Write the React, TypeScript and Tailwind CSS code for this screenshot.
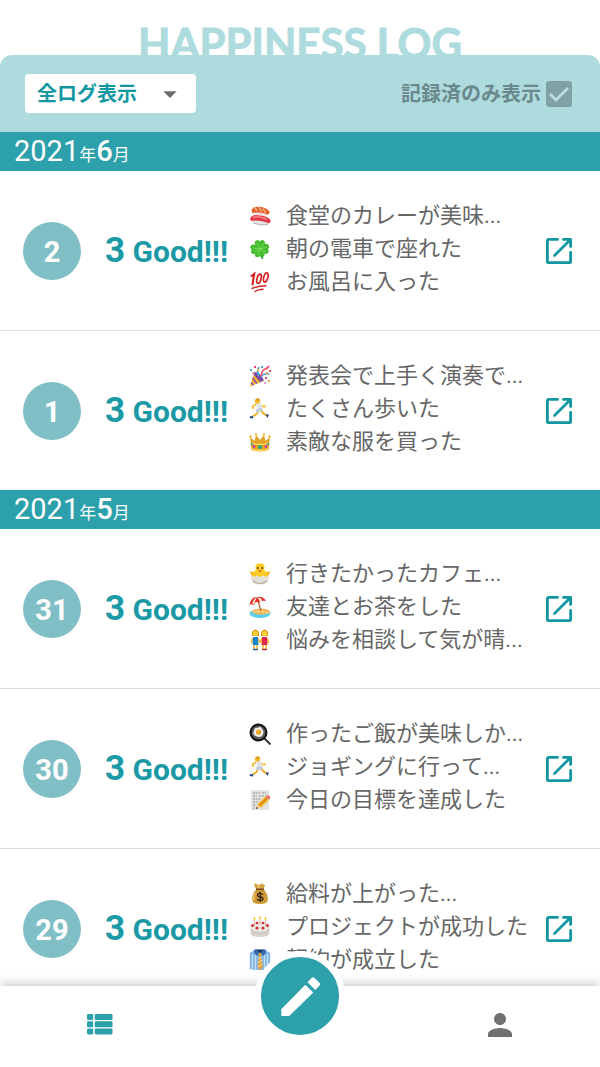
import type { ReactNode } from "react";
import { MdArrowDropDown, MdPerson } from "react-icons/md";

type EmojiName =
  | "sushi" | "clover" | "hundred" | "party" | "runner" | "crown" | "chick" | "beach"
  | "friends" | "egg" | "memo" | "money" | "cake" | "shirt";

type Entry = { emoji: EmojiName; text: string };
type Day = { day: number; entries: Entry[] };
type Month = { year: number; month: number; days: Day[] };

const months: Month[] = [
  {
    year: 2021,
    month: 6,
    days: [
      {
        day: 2,
        entries: [
          { emoji: "sushi", text: "食堂のカレーが美味..." },
          { emoji: "clover", text: "朝の電車で座れた" },
          { emoji: "hundred", text: "お風呂に入った" },
        ],
      },
      {
        day: 1,
        entries: [
          { emoji: "party", text: "発表会で上手く演奏で..." },
          { emoji: "runner", text: "たくさん歩いた" },
          { emoji: "crown", text: "素敵な服を買った" },
        ],
      },
    ],
  },
  {
    year: 2021,
    month: 5,
    days: [
      {
        day: 31,
        entries: [
          { emoji: "chick", text: "行きたかったカフェ..." },
          { emoji: "beach", text: "友達とお茶をした" },
          { emoji: "friends", text: "悩みを相談して気が晴..." },
        ],
      },
      {
        day: 30,
        entries: [
          { emoji: "egg", text: "作ったご飯が美味しか..." },
          { emoji: "runner", text: "ジョギングに行って..." },
          { emoji: "memo", text: "今日の目標を達成した" },
        ],
      },
      {
        day: 29,
        entries: [
          { emoji: "money", text: "給料が上がった..." },
          { emoji: "cake", text: "プロジェクトが成功した" },
          { emoji: "shirt", text: "契約が成立した" },
        ],
      },
    ],
  },
];

const drawings: Record<EmojiName, ReactNode> = {
  sushi: (
    <>
      <path d="M3 6.500 L18 9 L19 11 L4 9.500Z" fill="#e9e6e2" />
      <path d="M2.500 5 Q4 1.500 9 1.800 Q17 2 20.500 6.500 Q21 9.500 18.500 9.500 Q11 6.500 3 8Z" fill="#e8642f" />
      <path d="M6 2.500 L8 6 M10 2.500 L12.500 6.500 M14 3.600 L16.500 7.700" stroke="#ffc09a" strokeWidth="1.200" />
      <path d="M2 14.500 Q3 19 11 20 Q20 21 20.500 17 L19 15 L3 13Z" fill="#e6e4e2" />
      <path d="M4 18 Q12 21 19 19.500" stroke="#b8b4b4" strokeWidth="1" fill="none" />
      <path d="M1 13.500 Q3 9.500 9 10.200 Q19 11 21.500 15 Q22 18.500 19.500 18.200 Q11 14.500 2 16Z" fill="#e23a4b" />
      <path d="M4 12.300 Q11 10.500 18 14.500" stroke="#ff9ba1" strokeWidth="1.200" fill="none" />
    </>
  ),
  clover: (
    <>
      <path d="M11 11 Q11 18 14 21" stroke="#2d9a28" strokeWidth="1.600" fill="none" />
      <g fill="#45bd31">
        <path d="M11 11 Q4.500 7.500 6 3.500 Q8.500 .5 11 3.500 Q14 .5 16 4 Q17 8 11 11Z" />
        <path d="M11 11 Q15.500 4 19 6.500 Q21.500 9 19 11 Q21 14 17.500 16 Q14 16.500 11 11Z" />
        <path d="M11 11 Q6 5 2.500 7 Q0 9.500 2.800 11.500 Q.5 14.500 4 16 Q7.500 17 11 11Z" />
        <path d="M11 11 Q5.500 14 6 18 Q8 20.500 10.500 18 Q13.500 20.500 15.500 17.500 Q16 14 11 11Z" />
      </g>
      <path d="M8 5 L11 11 L15.500 5 M4 10 L11 11 L18 9 M5 14.500 L11 11 L9 17 M11 11 L16.500 14" stroke="#8bdd66" strokeWidth=".8" fill="none" />
    </>
  ),
  hundred: (
    <g stroke="#d6211e" fill="none" strokeLinecap="round">
      <path d="M2.500 5 L5.200 3 L3.500 13.500" strokeWidth="2.100" />
      <ellipse cx="10" cy="7.700" rx="2" ry="4.700" transform="rotate(15 10 7.700)" strokeWidth="1.700" />
      <ellipse cx="16.800" cy="6.400" rx="2" ry="4.700" transform="rotate(15 16.800 6.400)" strokeWidth="1.700" />
      <path d="M3 17.500 Q10 14.500 17 14.700" strokeWidth="1.500" />
      <path d="M6 20.500 Q9 18.500 14 18.300" strokeWidth="1.500" />
    </g>
  ),
  party: (
    <>
      <path d="M5.500 7 L14.500 16 L1 21.500Z" fill="#f5b52d" />
      <path d="M5 9 L12 17 M3.500 13 L8 18.500 M2 17.500 L4.500 20" stroke="#8a4ca8" strokeWidth="1.600" />
      <ellipse cx="10" cy="11.700" rx="2.200" ry="6.200" transform="rotate(-45 10 11.700)" fill="#79509f" />
      <path d="M10 11 Q7 6 10 2 M12 12 Q14 8 20.500 9" stroke="#4b9ae8" strokeWidth="1.600" fill="none" />
      <path d="M12 11 Q13 5 16 4 T20 1" stroke="#ef5371" strokeWidth="1.700" fill="none" />
      <path d="M5 1h2v2h-2z M16 12h2v2h-2z M20 5h2v2h-2z" fill="#e94666" />
      <path d="M1 4h2v2h-2z M12 1h2v2h-2z" fill="#5a9ff0" />
      <path d="M8 4h2v2h-2z M19 15h2v2h-2z M17 7h2v2h-2z" fill="#f5ad31" />
      <path d="M3 7h2v2h-2z M15 17h2v2h-2z" fill="#ed9cd0" />
    </>
  ),
  runner: (
    <>
      <path d="M12 12.500 L15 16 L18 17.500 M9.500 13 L7.500 16 L3.500 18.500" stroke="#efb027" strokeWidth="2" fill="none" />
      <path d="M7 6 L3.500 8.500 L4.500 11 M12.500 7 L15 9 L16.500 7.500" stroke="#f4b72c" strokeWidth="1.600" fill="none" />
      <path d="M6.500 5 L11.500 5 L13.500 10.500 L8.500 11.500Z" fill="#dfe4e9" />
      <path d="M8 10.500 L13 10 L14 13 L11 14 L8 15 L6.500 13Z" fill="#c6ced7" />
      <circle cx="8.500" cy="3" r="2.600" fill="#f5b928" />
      <path d="M6.500 2 Q8.500 -.500 11 1.500 L9 2.500Z" fill="#d59013" />
      <path d="M16.500 16.500 L20 16.500 L18.500 20Z M1 18 L4.500 18.500 L3.800 20.500 L.800 20Z" fill="#27448b" />
    </>
  ),
  crown: (
    <>
      <path d="M1 6 L5.500 10 L7 4 L11 9 L15 4 L16.500 10 L21 6 L19.500 19 Q11 22 2.500 19Z" fill="#e0a223" />
      <path d="M3 12 Q11 15 19 12 M3 18 Q11 21 19 18" stroke="#ffdf64" strokeWidth="1.300" fill="none" />
      <g fill="#f2bd38">
        <circle cx="1.500" cy="5.500" r="1.200" /><circle cx="7" cy="3.500" r="1.300" />
        <circle cx="15" cy="3.500" r="1.300" /><circle cx="20.500" cy="5.500" r="1.200" />
      </g>
      <circle cx="11" cy="16" r="2" fill="#16ac84" />
      <circle cx="5" cy="15.500" r="1.400" fill="#d13dad" />
      <circle cx="17" cy="15.500" r="1.400" fill="#d13dad" />
      <circle cx="2.800" cy="13" r="1" fill="#21a594" />
      <circle cx="19.200" cy="13" r="1" fill="#21a594" />
    </>
  ),
  chick: (
    <>
      <path d="M5 9 L.500 8.500 L3 13 L8 15 M17 9 L21.500 8.500 L19 13 L14 15" fill="#f8b51e" />
      <path d="M4 13 Q4 8 7 7 Q5 0 11 .500 Q17 0 15 7 Q18 8 18 13 L15 16 H7Z" fill="#ffcc27" />
      <circle cx="8.700" cy="5" r=".9" fill="#4b3319" /><circle cx="13.300" cy="5" r=".9" fill="#4b3319" />
      <path d="M8.800 7 H13.200 L11 9.500Z" fill="#e56d20" />
      <path d="M2 12 L5 14 L8 12.500 L11 14 L14 12.500 L17 14 L20 12 Q20.500 21.500 11 21.500 Q1.500 21.500 2 12Z" fill="#e2dfd9" />
      <path d="M4 18 Q11 23 18 18" stroke="#aea69a" strokeWidth="1.200" fill="none" />
    </>
  ),
  beach: (
    <>
      <ellipse cx="11" cy="17.500" rx="10.500" ry="4.500" fill="#5dd0e9" />
      <ellipse cx="12" cy="15.500" rx="9" ry="3" fill="#f4b65c" />
      <path d="M4 16 Q10 14 20 17" stroke="#ffe08b" strokeWidth="1" fill="none" />
      <path d="M8.500 3 L12 15" stroke="#a76334" strokeWidth="1.200" />
      <path d="M.5 9 Q2 1 8 1 Q14 0 17 5 Q12 4 10 7 Q6 4.500 5 9 Q2 7.500 .5 9Z" fill="#e53528" />
      <path d="M3.500 8 Q3.500 4 8 1 Q5.500 5 5.500 8Z M8 1 Q13 2 13 5 L11 6 Q10.500 3 8 1Z" fill="#fff1e7" />
    </>
  ),
  friends: (
    <>
      <path d="M4 9 L2 14 M9 9 L11 14 M13 9 L11 14 M18 9 L20 14 M5 14 L5 21 M8 14 L8 21 M14 14 L14 21 M17 14 L17 21" stroke="#f4b927" strokeWidth="1.500" />
      <path d="M4 8 H9 L9.500 16 H3.500Z" fill="#1686c7" />
      <path d="M13 8 H18 L18.500 16 H12.500Z" fill="#df2848" />
      <g fill="#d7951a"><path d="M3 7 V3 Q6.500 -2 10 3 V7Z" /><path d="M12 7 V3 Q15.500 -2 19 3 V7Z" /></g>
      <g fill="#ffcf37"><circle cx="6.500" cy="4.500" r="2.600" /><circle cx="15.500" cy="4.500" r="2.600" /></g>
      <path d="M4 20.500 H9" stroke="#245f99" strokeWidth="1.500" />
      <path d="M13 20.500 H18" stroke="#bd2741" strokeWidth="1.500" />
    </>
  ),
  egg: (
    <>
      <path d="M15.500 15.500 L20.800 20.800" stroke="#3b3b3b" strokeWidth="2.200" strokeLinecap="round" />
      <circle cx="9.500" cy="9.500" r="8" fill="#5a5a5a" stroke="#111" strokeWidth="2" />
      <path d="M5 8 Q5 4 9 5 Q11 2 13 6 Q16 9 13 13 Q10 15 7 13 Q3 12 5 8Z" fill="#f1efe9" />
      <circle cx="9.500" cy="9" r="2.600" fill="#f1a11d" />
      <circle cx="8.800" cy="8.300" r=".8" fill="#ffdc75" />
    </>
  ),
  memo: (
    <>
      <path d="M2 1 H20 V21 H2Z" fill="#e3e3e1" />
      <path d="M4 4 H11 M13 4 H17 M4 7 H8 M10 7 H15 M4 10 H12 M4 13 H9 M4 16 H7 M4 19 H6" stroke="#929292" strokeWidth="1" strokeDasharray="2 .7" />
      <path d="M7 20 L8.500 15 L16.500 7.500 L20 11 L12 18.500Z" fill="#f5b51e" />
      <path d="M10 17 L18 9" stroke="#d47717" strokeWidth="1.100" />
      <path d="M16.500 7.500 L18 6 Q20 5.500 21.500 8.500 L20 11Z" fill="#e67673" />
      <path d="M7 20 L8.500 15 L12 18.500Z" fill="#f0cf9b" />
      <path d="M7 20 L7.700 17.800 L9 19.300Z" fill="#383838" />
    </>
  ),
  money: (
    <>
      <path d="M7 6 Q4 1 6 .5 L10 2 L13 .5 L16 2 L14.500 6Z" fill="#cfa13e" />
      <path d="M7.500 6 H14.500 Q20 12 18.500 18 Q18 21 11 21 Q4 21 3.500 18 Q2 12 7.500 6Z" fill="#cc9a35" />
      <path d="M6 10 Q4 14 5 17 M9 2 L10 6" stroke="#efcd73" strokeWidth="1.300" fill="none" />
      <path d="M7 6.300 H15" stroke="#7e4b22" strokeWidth="1.700" />
      <path d="M14 11.300 Q8.500 9 8.500 12 Q8.500 13.500 11 13.800 Q14 14 14 16 Q13 18.500 8 16.700 M11.200 9 V19" stroke="#342717" strokeWidth="1.300" fill="none" />
    </>
  ),
  cake: (
    <>
      <path d="M1.500 11 V17 Q2 21 11 21 Q20 21 20.500 17 V11Z" fill="#d6d3ce" />
      <ellipse cx="11" cy="10.500" rx="9.500" ry="5" fill="#eeeae5" />
      <path d="M2 15 Q11 20 20 15" stroke="#c5c0bb" strokeWidth=".8" fill="none" />
      <path d="M5.500 4 V10 M11 3 V9 M16.500 4 V10" stroke="#dfb9a0" strokeWidth="1.300" />
      <path d="M5.500 1 V4 M11 .5 V3 M16.500 1 V4" stroke="#f5c136" strokeWidth="1.600" />
      <g fill="#cd3039">
        <circle cx="3.500" cy="9.500" r="1.500" /><circle cx="8" cy="7" r="1.300" />
        <circle cx="14" cy="7" r="1.300" /><circle cx="18.500" cy="9.500" r="1.500" />
        <circle cx="8" cy="12" r="1.600" /><circle cx="14" cy="12" r="1.600" />
      </g>
    </>
  ),
  shirt: (
    <>
      <path d="M5 1.500 L.800 4 V20 L5 21 H17 L21.200 20 V4 L17 1.500Z" fill="#86b6e4" />
      <path d="M3.500 5 V20 M6.500 6 V21 M15.500 6 V21 M18.500 5 V20" stroke="#c4e1f8" strokeWidth="1.200" />
      <path d="M5 .5 H17 L16.500 5 L13.500 7 L11 3.500 L8.500 7 L5 4Z" fill="#376da7" />
      <path d="M7 .8 H15 L11 4Z" fill="#183a65" />
      <path d="M9.500 4 H12.500 L12 7 L14 18 L11 21 L8.500 18 L10 7Z" fill="#e2a237" />
      <path d="M9.500 10 L12.500 8 M9 14 L13 11 M9 18 L13.500 15" stroke="#fff0be" strokeWidth="1" />
    </>
  ),
};

function Emoji({ name }: { name: EmojiName }) {
  return (
    <svg viewBox="0 0 22 22" className="size-[22px] shrink-0" aria-hidden="true">
      {drawings[name]}
    </svg>
  );
}

function OpenIcon() {
  return (
    <svg
      viewBox="0 0 28 28"
      className="size-7"
      fill="none"
      stroke="currentColor"
      strokeWidth="2.800"
      strokeLinecap="round"
      strokeLinejoin="round"
      aria-hidden="true"
    >
      <path d="M12.500 2.400 H3.500 Q2.400 2.400 2.400 3.500 V24.500 Q2.400 25.600 3.500 25.600 H24.500 Q25.600 25.600 25.600 24.500 V15.500" />
      <path d="M18.500 2.400 H25.600 V9.600 M25 3 L9.500 18.500" />
    </svg>
  );
}

function ListIcon() {
  return (
    <svg viewBox="0 0 26 21" className="h-[21px] w-[26px]" fill="currentColor" aria-hidden="true">
      {[0, 7.2, 14.4].map((y) => (
        <g key={y}>
          <rect x="0" y={y} width="6.200" height="6" rx="1.300" />
          <rect x="7.700" y={y} width="17.800" height="6" rx="1.300" />
        </g>
      ))}
    </svg>
  );
}

function PencilIcon() {
  return (
    <svg
      viewBox="0 0 41 41"
      className="size-[41px]"
      fill="currentColor"
      stroke="currentColor"
      strokeWidth="1.400"
      strokeLinejoin="round"
      aria-hidden="true"
    >
      <path d="M2 39.300 V33.500 L25.300 9.700 L32.300 16.600 L9 39.300Z" />
      <path d="M28.500 6.200 L32.100 2.500 Q33 1.700 34 2.500 L39 7.200 Q39.800 8.100 39 9 L35.300 13Z" />
    </svg>
  );
}

function DayRow({ day, entries }: Day) {
  return (
    <li className="flex items-center border-b border-[#dcdcdc] py-7 pr-[27px] pl-[23px] last:border-b-0">
      <div className="flex size-[58px] shrink-0 items-center justify-center rounded-full bg-[#80bfc6] pt-0.5 text-[29px] leading-10 font-bold text-white">
        {day}
      </div>
      <p className="ml-6 w-[144px] shrink-0 pt-0.5 text-[30px] leading-10 font-bold whitespace-nowrap text-[#1b99a5]">
        <span className="text-[35px]">3</span> Good!!!
      </p>
      <ul className="min-w-0 flex-1 pb-1">
        {entries.map((entry) => (
          <li key={entry.text} className="flex h-[33px] items-center gap-[15px]">
            <Emoji name={entry.emoji} />
            <span className="text-[22px] leading-[33px] whitespace-nowrap text-[#666]">{entry.text}</span>
          </li>
        ))}
      </ul>
      <a href="#detail" aria-label="詳細を開く" className="shrink-0 text-[#1297a2]">
        <OpenIcon />
      </a>
    </li>
  );
}

export default function App() {
  return (
    <div className="flex h-screen flex-col overflow-hidden bg-white font-['Roboto','Noto_Sans_CJK_JP',sans-serif]">
      <h1 className="h-[55px] shrink-0 pt-[18px] text-center font-['Lato',sans-serif] text-[42px] leading-[50px] font-bold whitespace-nowrap text-[#aedbde] [-webkit-text-stroke:1px_#aedbde]">
        HAPPINESS LOG
      </h1>

      <div className="flex h-[77px] shrink-0 items-center justify-between rounded-t-xl bg-[#aedbde] pr-7 pl-[25px]">
        <div className="relative w-[171px]">
          <select
            aria-label="ログの表示"
            className="h-[39px] w-full appearance-none rounded bg-white pr-10 pl-3 text-[20px] font-bold text-[#1297a2]"
          >
            <option>全ログ表示</option>
          </select>
          <MdArrowDropDown className="pointer-events-none absolute top-1 right-2.5 size-8 text-[#6b6b6b]" aria-hidden="true" />
        </div>
        <label className="flex items-center gap-[5px] text-[20px] font-bold text-[#6b898c]">
          記録済のみ表示
          <span className="relative block size-[26px]">
            <input type="checkbox" defaultChecked className="peer block size-[26px] appearance-none rounded-[3px] bg-[#80a1a6]" />
            <svg
              viewBox="0 0 26 26"
              className="pointer-events-none absolute inset-0 hidden size-full peer-checked:block"
              fill="none"
              stroke="#b9dfe2"
              strokeWidth="2.800"
              aria-hidden="true"
            >
              <path d="M4 13 L10 19 L22 7" />
            </svg>
          </span>
        </label>
      </div>

      <main className="min-h-0 flex-1 overflow-y-auto [scrollbar-width:none]">
        {months.map(({ year, month, days }) => (
          <section key={month}>
            <h2 className="h-[39px] bg-[#2ca0ab] pl-3.5 text-[17px] leading-[39px] text-white">
              <span className="text-[29px]">{year}</span>年
              <span className="text-[29px] font-medium">{month}</span>月
            </h2>
            <ul>
              {days.map((d) => (
                <DayRow key={d.day} {...d} />
              ))}
            </ul>
          </section>
        ))}
      </main>

      <nav className="relative z-10 grid h-[81px] shrink-0 grid-cols-3 bg-white shadow-[0_-2px_10px_rgba(0,0,0,0.22)]">
        <a href="#list" aria-label="ログ一覧" className="flex items-center justify-center pb-1 text-[#2ca0ab]">
          <ListIcon />
        </a>
        <div className="flex justify-center">
          <button
            type="button"
            aria-label="記録する"
            className="-mt-[35px] flex size-[90px] items-center justify-center rounded-full border-6 border-white bg-[#2ca0ab] text-white"
          >
            <PencilIcon />
          </button>
        </div>
        <a href="#profile" aria-label="プロフィール" className="flex items-center justify-center pb-1 text-[#707070]">
          <MdPerson className="size-9" aria-hidden="true" />
        </a>
      </nav>
    </div>
  );
}
